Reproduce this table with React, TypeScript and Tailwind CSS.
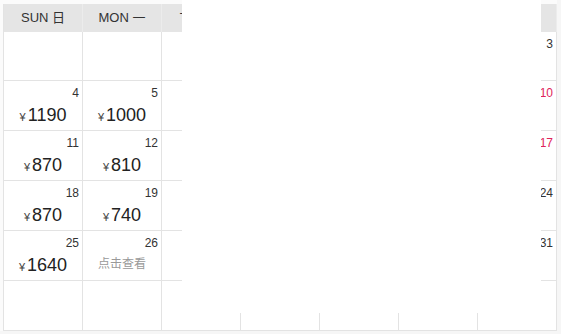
const heads = ["SUN 日", "MON 一", "TUE 二", "WED 三", "THU 四", "FRI 五", "SAT 六"];

type Cell = { day?: number; price?: string; link?: boolean; red?: boolean };

const rows: Cell[][] = [
  [{}, {}, {}, {}, { day: 1 }, { day: 2 }, { day: 3 }],
  [{ day: 4, price: "1190" }, { day: 5, price: "1000" }, { day: 6 }, { day: 7 }, { day: 8 }, { day: 9 }, { day: 10, red: true }],
  [{ day: 11, price: "870" }, { day: 12, price: "810" }, { day: 13 }, { day: 14 }, { day: 15 }, { day: 16 }, { day: 17, red: true }],
  [{ day: 18, price: "870" }, { day: 19, price: "740" }, { day: 20 }, { day: 21 }, { day: 22 }, { day: 23 }, { day: 24 }],
  [{ day: 25, price: "1640" }, { day: 26, link: true }, { day: 27 }, { day: 28 }, { day: 29 }, { day: 30 }, { day: 31 }],
  [{}, {}, {}, {}, {}, {}, {}],
];

function DayCell({ cell, first }: { cell: Cell; first: boolean }) {
  return (
    <div className={`w-[79px] border-r border-[#e3e3e3] ${first ? "h-[48px]" : "h-[49px]"} flex flex-col pt-[5px]`}>
      {cell.day !== undefined && (
        <div className={`text-right pr-[3px] text-[12px] leading-[14px] ${cell.red ? "text-[#e0245a]" : "text-[#333]"}`}>
          {cell.day}
        </div>
      )}
      {cell.price && (
        <div className="mt-[4px] flex items-baseline justify-center text-[#222] leading-[22px]">
          <span className="text-[11px] mr-[2px] text-[#444]">¥</span>
          <span className="text-[18px]">{cell.price}</span>
        </div>
      )}
      {cell.link && (
        <div className="mt-[6px] text-center text-[12px] leading-[16px] text-[#999]">点击查看</div>
      )}
    </div>
  );
}

export default function App() {
  return (
    <div
      className="relative w-[561px] h-[334px] bg-[#f6f6f6] overflow-hidden"
      style={{ fontFamily: '"Liberation Sans", Arial, "Noto Sans CJK SC", sans-serif' }}
    >
      <div className="bg-[#fbfbfb] pt-[4px] pl-[3px] w-[557px]">
        <div className="w-[554px] border-l border-[#e3e3e3] bg-white">
          {/* Week header */}
          <div className="flex h-[28px] bg-[#e5e5e5]">
            {heads.map((h) => (
              <div
                key={h}
                className="w-[79px] border-r border-[#ececec] flex items-center justify-center text-[13px] text-[#333]"
              >
                {h}
              </div>
            ))}
          </div>

          {/* Days */}
          {rows.map((row, ri) => (
            <div key={ri} className="flex border-b border-[#e3e3e3]">
              {row.map((cell, ci) => (
                <DayCell key={ci} cell={cell} first={ri === 0} />
              ))}
            </div>
          ))}
        </div>
      </div>

      {/* Popup panel lying over the calendar */}
      <div className="absolute left-[182px] top-0 w-[359px] h-[313px] bg-white" />
    </div>
  );
}
